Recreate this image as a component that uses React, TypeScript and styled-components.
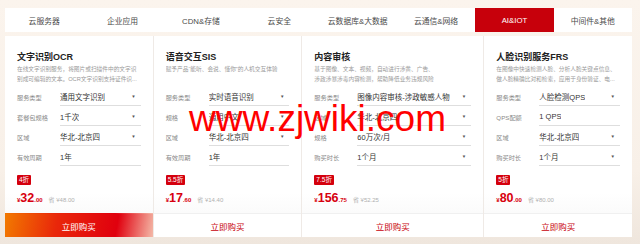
import styled, { createGlobalStyle } from "styled-components"

const GlobalStyle = createGlobalStyle`
  html, body {
    margin: 0;
    padding: 0;
    background: #f8f0e8;
  }
  body {
    font-family: "Liberation Sans", "Noto Sans CJK SC", sans-serif;
    width: 640px;
    height: 244px;
    overflow: hidden;
  }
`

const Page = styled.div`
  position: relative;
  padding: 8px 8px 0 5px;
  height: 244px;
  box-sizing: border-box;
  background: linear-gradient(180deg, #fbf4ed 0%, #f8f0e8 70%, #efe6dd 100%);
`

const Nav = styled.nav`
  display: grid;
  grid-template-columns: repeat(8, 1fr);
  height: 24px;
  background: #ffffff;
`

const NavItem = styled.div<{ $active?: boolean }>`
  display: flex;
  align-items: center;
  justify-content: center;
  font-size: 7.8px;
  color: ${p => (p.$active ? "#ffffff" : "#4a4a4a")};
  background: ${p => (p.$active ? "#c7000b" : "transparent")};
`

const Cards = styled.div`
  display: grid;
  grid-template-columns: repeat(4, 1fr);
  gap: 1px;
  margin-top: 4px;
  height: 201px;
  background: #efeae6;
`

const Card = styled.div`
  display: flex;
  flex-direction: column;
  background: linear-gradient(180deg, #ffffff 0%, #ffffff 78%, #f6f6f6 100%);
`

const Body = styled.div`
  flex: 1;
  padding: 14px 12px 0;
`

const Title = styled.h3`
  margin: 0;
  font-size: 9px;
  line-height: 14px;
  font-weight: 700;
  color: #222222;
`

const Desc = styled.p`
  margin: 0;
  width: 121px;
  height: 20px;
  font-size: 5.7px;
  line-height: 10px;
  color: #9a9a9a;
  overflow: hidden;
  display: -webkit-box;
  -webkit-line-clamp: 2;
  -webkit-box-orient: vertical;
`

const Fields = styled.div`
  display: flex;
  flex-direction: column;
  gap: 2px;
  margin-top: 4px;
`

const Row = styled.div`
  display: flex;
  align-items: stretch;
  height: 18px;
`

const Label = styled.span`
  width: 43px;
  flex: none;
  display: flex;
  align-items: center;
  font-size: 6.2px;
  color: #8a8a8a;
`

const Value = styled.div`
  flex: 1;
  min-width: 0;
  display: flex;
  align-items: center;
  justify-content: space-between;
  border-bottom: 1.5px solid #dedede;
  font-size: 7.5px;
  color: #333333;
  white-space: nowrap;
`

const ValueText = styled.span`
  overflow: hidden;
  text-overflow: ellipsis;
`

const Arrow = styled.span`
  flex: none;
  margin: 0 5px 0 12px;
  font-size: 4.5px;
  color: #555555;
`

const Badge = styled.span`
  display: inline-block;
  margin-top: 9px;
  padding: 0 2px;
  height: 10px;
  line-height: 10px;
  font-size: 6.5px;
  color: #ffffff;
  background: #d4000d;
  border-radius: 1px;
`

const PriceLine = styled.div`
  display: flex;
  align-items: baseline;
  margin-top: 5px;
  color: #d7000f;
`

const Yen = styled.span`
  font-size: 6px;
  font-weight: 700;
`

const Big = styled.span`
  font-size: 12.5px;
  font-weight: 700;
`

const Cents = styled.span`
  font-size: 6px;
  font-weight: 700;
`

const Save = styled.span`
  margin-left: 6px;
  font-size: 6px;
  color: #b0b0b0;
`

const BuyButton = styled.button<{ $primary?: boolean }>`
  height: 24px;
  border: none;
  border-top: 1px solid ${p => (p.$primary ? "transparent" : "#f0f0f0")};
  font-family: inherit;
  font-size: 8.5px;
  color: ${p => (p.$primary ? "#ffffff" : "#c7000b")};
  background: ${p =>
    p.$primary
      ? "linear-gradient(100deg, #f27a00 0%, #e9270a 35%, #e0000e 75%, #f4b9a8 100%)"
      : "#ffffff"};
  cursor: pointer;
`

const Watermark = styled.div`
  position: absolute;
  left: 189px;
  top: 100px;
  font-family: "Liberation Sans", Arial, sans-serif;
  font-size: 37px;
  line-height: 1;
  color: #ff0000;
  pointer-events: none;
`

type Field = { label: string; value: string; select?: boolean }
type Product = {
  title: string
  desc: string
  fields: Field[]
  discount: string
  price: string
  cents: string
  save: string
}

const tabs = ["云服务器", "企业应用", "CDN&存储", "云安全", "云数据库&大数据", "云通信&网络", "AI&IOT", "中间件&其他"]

const products: Product[] = [
  {
    title: "文字识别OCR",
    desc: "在线文字识别服务，将图片或扫描件中的文字识别成可编辑的文本。OCR文字识别支持证件识...",
    fields: [
      { label: "服务类型", value: "通用文字识别", select: true },
      { label: "套餐包规格", value: "1千次", select: true },
      { label: "区域", value: "华北-北京四", select: true },
      { label: "有效周期", value: "1年" },
    ],
    discount: "4折",
    price: "32",
    cents: ".00",
    save: "省 ¥48.00",
  },
  {
    title: "语音交互SIS",
    desc: "赋予产品“能听、会说、懂你”的人机交互体验",
    fields: [
      { label: "服务类型", value: "实时语音识别", select: true },
      { label: "规格", value: "通用中文", select: true },
      { label: "区域", value: "华北-北京四", select: true },
      { label: "有效周期", value: "1年" },
    ],
    discount: "5.5折",
    price: "17",
    cents: ".60",
    save: "省 ¥14.40",
  },
  {
    title: "内容审核",
    desc: "基于图像、文本、视频，自动进行涉黄、广告、涉政涉暴涉毒内容检测，帮助降低业务违规风险",
    fields: [
      { label: "服务类型", value: "图像内容审核-涉政敏感人物", select: true },
      { label: "区域", value: "华北-北京四", select: true },
      { label: "规格", value: "60万次/月", select: true },
      { label: "购买时长", value: "1个月", select: true },
    ],
    discount: "7.5折",
    price: "156",
    cents: ".75",
    save: "省 ¥52.25",
  },
  {
    title: "人脸识别服务FRS",
    desc: "在图像中快速检测人脸、分析人脸关键点信息、做人脸精确比对和检索，应用于身份验证、电...",
    fields: [
      { label: "服务类型", value: "人脸检测QPS", select: true },
      { label: "QPS配额", value: "1 QPS" },
      { label: "区域", value: "华北-北京四", select: true },
      { label: "购买时长", value: "1个月", select: true },
    ],
    discount: "5折",
    price: "80",
    cents: ".00",
    save: "省 ¥80.00",
  },
]

export default function App() {
  return (
    <>
      <GlobalStyle />
      <Page>
        <Nav>
          {tabs.map(t => (
            <NavItem key={t} $active={t === "AI&IOT"}>{t}</NavItem>
          ))}
        </Nav>
        <Cards>
          {products.map((p, i) => (
            <Card key={p.title}>
              <Body>
                <Title>{p.title}</Title>
                <Desc>{p.desc}</Desc>
                <Fields>
                  {p.fields.map(f => (
                    <Row key={f.label}>
                      <Label>{f.label}</Label>
                      <Value>
                        <ValueText>{f.value}</ValueText>
                        {f.select && <Arrow>▼</Arrow>}
                      </Value>
                    </Row>
                  ))}
                </Fields>
                <Badge>{p.discount}</Badge>
                <PriceLine>
                  <Yen>¥</Yen>
                  <Big>{p.price}</Big>
                  <Cents>{p.cents}</Cents>
                  <Save>{p.save}</Save>
                </PriceLine>
              </Body>
              <BuyButton $primary={i === 0}>立即购买</BuyButton>
            </Card>
          ))}
        </Cards>
        <Watermark>www.zjwiki.com</Watermark>
      </Page>
    </>
  )
}
